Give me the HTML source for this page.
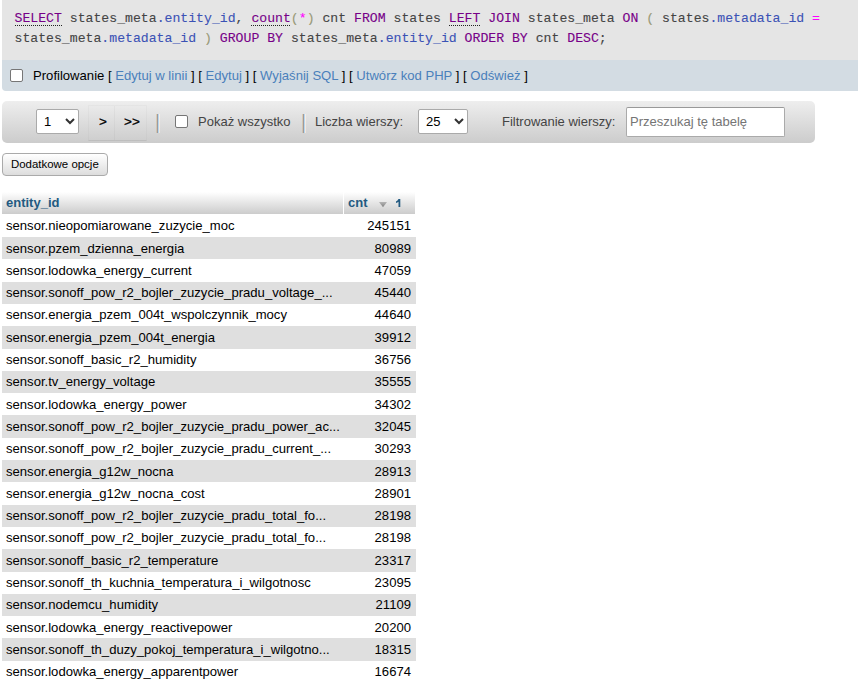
<!DOCTYPE html>
<html><head><meta charset="utf-8">
<style>
*{box-sizing:border-box}
html,body{margin:0;padding:0;background:#fff;width:858px;height:682px;overflow:hidden;position:relative}
body{font-family:"Liberation Sans",sans-serif;font-size:13px;color:#000}
.abs{position:absolute}
#sql{left:2px;top:0;width:856px;height:60px;background:#e5e5e5}
#sql pre{position:absolute;left:12.5px;top:9px;margin:0;font-family:"Liberation Mono",monospace;font-size:13.17px;line-height:20px;color:#444;white-space:pre;-webkit-text-stroke:0.1px}
.kw{color:#708}
.cl{color:#3b52b5}
.op{color:#f0f}
.br{color:#997}
.dot{background:linear-gradient(to right,#222 50%,transparent 50%) repeat-x 0 100%/2px 1px}
#tools{left:2px;top:60px;width:856px;height:31px;background:#d3dce3;border-bottom-left-radius:4px}
.cb{position:absolute;width:13px;height:13px;border:1px solid #767676;border-radius:2px;background:#fff}
#tools .t{position:absolute;left:31px;top:8px;line-height:15px;white-space:pre;font-size:13.1px}
#tools a{color:#4a80bb;text-decoration:none}
#nav{left:2px;top:101px;width:813px;height:42px;border-radius:5px;background:linear-gradient(#eee,#ccc)}
.sel{position:absolute;background:#fff;border:1px solid #aaa;height:25px}
.lbl{position:absolute;line-height:15px;white-space:pre;color:#444}
#btn{left:2px;top:153px;width:106px;height:23px;border:1px solid #aaa;border-radius:4px;background:linear-gradient(#fff,#ddd);font-size:11.45px;line-height:13px}
.sel{border-radius:2px}
.sv{position:absolute;left:7px;top:4px;line-height:15px}
.chev{position:absolute;right:3px;top:8px}
.cell{position:absolute;border:1px solid rgba(0,0,0,0.025);border-bottom-color:rgba(0,0,0,0.07)}
.lbl.g{color:#000;font-size:13.5px;-webkit-text-stroke:0.3px}
.sep{position:absolute;font-size:19.5px;line-height:22px;color:#999;text-shadow:1px 0 #fff}
.inp{position:absolute;background:#fff;border:1px solid #aaa;border-top-color:#999;border-radius:2px}
.inp span{position:absolute;left:3px;top:6px;line-height:15px;color:#757575}
#btn span{position:absolute;left:8px;top:4px;line-height:13px}
#tbl{position:absolute;left:2px;top:192.2px;width:414px;height:500px}
.th{position:absolute;top:0;height:21.6px;background:linear-gradient(#fff,#ccc);color:#235a81;font-weight:bold;line-height:15px;padding:3px 4px;white-space:pre}
.arr{position:absolute;left:34.6px;top:9.6px}
.one{position:absolute;left:51px;top:6.9px}
.r{position:absolute;left:0;width:414px;height:22.3px;line-height:15px;white-space:pre;font-size:13.1px}
.r.even{background:#dfdfdf}
.c1{position:absolute;left:4px;top:3.5px}
.c2{position:absolute;right:5px;top:3.5px}
</style></head><body>
<div id="sql" class="abs"><pre><span class="kw dot">SELECT</span> states_meta<span class="cl">.entity_id</span>, <span class="kw dot">count</span><span class="br">(</span><span class="op">*</span><span class="br">)</span> cnt <span class="kw">FROM</span> states <span class="kw dot">LEFT</span> <span class="kw">JOIN</span> states_meta <span class="kw">ON</span> <span class="br">(</span> states<span class="cl">.metadata_id</span> <span class="op">=</span>
states_meta<span class="cl">.metadata_id</span> <span class="br">)</span> <span class="kw">GROUP BY</span> states_meta<span class="cl">.entity_id</span> <span class="kw">ORDER BY</span> cnt <span class="kw">DESC</span>;</pre></div>
<div id="tools" class="abs">
<div class="cb" style="left:8px;top:9px"></div>
<div class="t">Profilowanie [ <a>Edytuj w linii</a> ] [ <a>Edytuj</a> ] [ <a>Wyjaśnij SQL</a> ] [ <a>Utwórz kod PHP</a> ] [ <a>Odśwież</a> ]</div>
</div>
<div id="nav" class="abs">
<div class="sel" style="left:34px;top:8px;width:43px"><span class="sv">1</span><svg class="chev" width="10" height="7" viewBox="0 0 10 7"><path d="M1 1 L5 5 L9 1" fill="none" stroke="#333" stroke-width="2"/></svg></div>
<div class="cell" style="left:86px;top:4px;width:59px;height:36px"></div>
<div style="position:absolute;left:112px;top:5px;width:1px;height:34px;background:rgba(0,0,0,0.03)"></div>
<div class="lbl g" style="left:97px;top:13px">&gt;</div>
<div class="lbl g" style="left:122px;top:13px">&gt;&gt;</div>
<div class="sep" style="left:153px;top:10px">|</div>
<div class="cb" style="left:173px;top:14px"></div>
<div class="lbl" style="left:196px;top:13px">Pokaż wszystko</div>
<div class="sep" style="left:299px;top:10px">|</div>
<div class="lbl" style="left:313px;top:13px">Liczba wierszy:</div>
<div class="sel" style="left:416px;top:8px;width:50px"><span class="sv">25</span><svg class="chev" width="10" height="7" viewBox="0 0 10 7"><path d="M1 1 L5 5 L9 1" fill="none" stroke="#333" stroke-width="2"/></svg></div>
<div class="lbl" style="left:500px;top:13px">Filtrowanie wierszy:</div>
<div class="inp" style="left:624px;top:6px;width:159px;height:30px"><span>Przeszukaj tę tabelę</span></div>
</div>
<div id="btn" class="abs"><span>Dodatkowe opcje</span></div>
<div id="tbl">
<div class="th" style="left:0;width:341px">entity_id</div>
<div class="th" style="left:342px;width:71px">cnt<svg class="arr" width="8" height="6" viewBox="0 0 8 6"><defs><linearGradient id="ag" x1="0" y1="0" x2="0" y2="1"><stop offset="0" stop-color="#b5b5b5"/><stop offset="1" stop-color="#808080"/></linearGradient></defs><path d="M0 0 H8 L4 5.2 Z" fill="url(#ag)"/></svg><svg class="one" width="7" height="8" viewBox="0 0 7 8"><path d="M3.5 0 H5.3 V8 H3.5 V2.8 Q2.5 3.6 1 4.1 V2.5 Q2.7 1.8 3.5 0 Z" fill="#235a81"/></svg></div>
<div class="r" style="top:22.55px"><span class="c1">sensor.nieopomiarowane_zuzycie_moc</span><span class="c2">245151</span></div>
<div class="r even" style="top:44.85px"><span class="c1">sensor.pzem_dzienna_energia</span><span class="c2">80989</span></div>
<div class="r" style="top:67.15px"><span class="c1">sensor.lodowka_energy_current</span><span class="c2">47059</span></div>
<div class="r even" style="top:89.45px"><span class="c1">sensor.sonoff_pow_r2_bojler_zuzycie_pradu_voltage_...</span><span class="c2">45440</span></div>
<div class="r" style="top:111.75px"><span class="c1">sensor.energia_pzem_004t_wspolczynnik_mocy</span><span class="c2">44640</span></div>
<div class="r even" style="top:134.05px"><span class="c1">sensor.energia_pzem_004t_energia</span><span class="c2">39912</span></div>
<div class="r" style="top:156.35px"><span class="c1">sensor.sonoff_basic_r2_humidity</span><span class="c2">36756</span></div>
<div class="r even" style="top:178.65px"><span class="c1">sensor.tv_energy_voltage</span><span class="c2">35555</span></div>
<div class="r" style="top:200.95px"><span class="c1">sensor.lodowka_energy_power</span><span class="c2">34302</span></div>
<div class="r even" style="top:223.25px"><span class="c1">sensor.sonoff_pow_r2_bojler_zuzycie_pradu_power_ac...</span><span class="c2">32045</span></div>
<div class="r" style="top:245.55px"><span class="c1">sensor.sonoff_pow_r2_bojler_zuzycie_pradu_current_...</span><span class="c2">30293</span></div>
<div class="r even" style="top:267.85px"><span class="c1">sensor.energia_g12w_nocna</span><span class="c2">28913</span></div>
<div class="r" style="top:290.15px"><span class="c1">sensor.energia_g12w_nocna_cost</span><span class="c2">28901</span></div>
<div class="r even" style="top:312.45px"><span class="c1">sensor.sonoff_pow_r2_bojler_zuzycie_pradu_total_fo...</span><span class="c2">28198</span></div>
<div class="r" style="top:334.75px"><span class="c1">sensor.sonoff_pow_r2_bojler_zuzycie_pradu_total_fo...</span><span class="c2">28198</span></div>
<div class="r even" style="top:357.05px"><span class="c1">sensor.sonoff_basic_r2_temperature</span><span class="c2">23317</span></div>
<div class="r" style="top:379.35px"><span class="c1">sensor.sonoff_th_kuchnia_temperatura_i_wilgotnosc</span><span class="c2">23095</span></div>
<div class="r even" style="top:401.65px"><span class="c1">sensor.nodemcu_humidity</span><span class="c2">21109</span></div>
<div class="r" style="top:423.95px"><span class="c1">sensor.lodowka_energy_reactivepower</span><span class="c2">20200</span></div>
<div class="r even" style="top:446.25px"><span class="c1">sensor.sonoff_th_duzy_pokoj_temperatura_i_wilgotno...</span><span class="c2">18315</span></div>
<div class="r" style="top:468.55px"><span class="c1">sensor.lodowka_energy_apparentpower</span><span class="c2">16674</span></div>
</div>
</body></html>
